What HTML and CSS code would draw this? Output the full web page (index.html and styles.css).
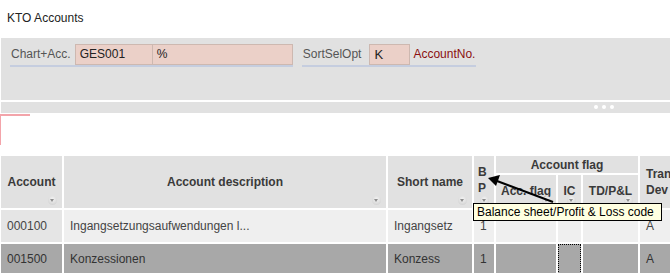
FILE: index.html
```html
<!DOCTYPE html>
<html>

<head>
    <title>KTO Accounts</title>
    <link rel="stylesheet" href="styles.css">
</head>

<body>
    <div class="page">
        <div class="title">KTO Accounts</div>

        <div class="filter">
            <div class="field">
                <span class="lbl">Chart+Acc.</span>
                <span class="inp chart">GES001</span>
                <span class="inp acc">%</span>
            </div>
            <div class="field">
                <span class="lbl opt">SortSelOpt</span>
                <span class="inp sel">K</span>
                <span class="value">AccountNo.</span>
            </div>
        </div>

        <div class="bar"><span class="dots"><i></i><i></i><i></i></span></div>
        <div class="marker"></div>

        <div class="grid">
            <div class="hd span2 c1 center">Account<span class="sort"></span></div>
            <div class="hd span2 c2 center">Account description<span class="sort"></span></div>
            <div class="hd span2 c3 center">Short name<span class="sort"></span></div>
            <div class="hd span2 c4 stack">B<br>P<span class="sort"></span></div>
            <div class="hd group">Account flag</div>
            <div class="hd span2 c8 stack wide">Tran<br>Dev</div>
            <div class="hd sub c5 center">Acc. flag<span class="sort"></span></div>
            <div class="hd sub c6 center">IC<span class="sort"></span></div>
            <div class="hd sub c7 center">TD/P&amp;L<span class="sort"></span></div>

            <div class="cell light key">000100</div>
            <div class="cell light">Ingangsetzungsaufwendungen l...</div>
            <div class="cell light">Ingangsetz</div>
            <div class="cell light">1</div>
            <div class="cell light"></div>
            <div class="cell light"></div>
            <div class="cell light"></div>
            <div class="cell light">A</div>

            <div class="cell dark">001500</div>
            <div class="cell dark">Konzessionen</div>
            <div class="cell dark">Konzess</div>
            <div class="cell dark">1</div>
            <div class="cell dark"></div>
            <div class="cell dark focus"></div>
            <div class="cell dark"></div>
            <div class="cell dark">A</div>
        </div>

        <svg class="arrow" width="80" height="40" viewBox="0 0 80 40">
            <line x1="70" y1="30" x2="14" y2="9" stroke="#000" stroke-width="2" />
            <polygon points="5,6 17,3 13,14" fill="#000" />
        </svg>
        <div class="tip">Balance sheet/Profit &amp; Loss code</div>
    </div>
</body>

</html>
```

FILE: styles.css
```css
body {
    margin: 0;
    background-color: #fff;
    font-family: "Liberation Sans", Arial, sans-serif;
    font-size: 12px;
    color: #222;
}

.page {
    position: relative;
    width: 670px;
    height: 273px;
    overflow: hidden;
}

.title {
    height: 38px;
    line-height: 36px;
    padding-left: 7px;
}

.filter {
    margin-left: 1px;
    height: 62px;
    background-color: #e1e1e1;
    box-sizing: border-box;
    padding: 6px 0 0 9px;
    display: flex;
    gap: 9px;
    align-items: flex-start;
}

.field {
    display: flex;
    align-items: stretch;
    height: 21px;
    border-bottom: 2px solid #c5cddf;
}

.lbl {
    color: #555;
    line-height: 21px;
    padding: 0 4px 0 1px;
}

.lbl.opt {
    padding-right: 8px;
}

.inp {
    box-sizing: border-box;
    height: 21px;
    line-height: 19px;
    background-color: #ebd0c8;
    border: 1px solid #cdb8b0;
    padding-left: 4px;
    color: #222;
}

.inp.chart {
    width: 78px;
}

.inp.acc {
    width: 141px;
    margin-left: -1px;
}

.inp.sel {
    width: 41px;
    font-size: 13px;
}

.value {
    color: #8b1010;
    line-height: 21px;
    padding: 0 1px 0 3px;
}

.bar {
    margin: 2px 0 0 1px;
    height: 11px;
    background-color: #e1e1e1;
    position: relative;
}

.dots {
    position: absolute;
    left: 593px;
    top: 3px;
    display: flex;
    gap: 4px;
}

.dots i {
    width: 4px;
    height: 4px;
    border-radius: 50%;
    background-color: #fff;
}

.marker {
    margin-top: 1px;
    width: 29px;
    height: 29px;
    border-top: 2px solid #f3a4aa;
    border-left: 1px solid #f3a4aa;
}

.grid {
    margin: 11px 0 0 1px;
    display: grid;
    grid-template-columns: 61px 322px 84px 20px 60px 23px 55px 60px;
    grid-template-rows: 17px 33px 32px 30px;
    gap: 2px;
}

.hd {
    position: relative;
    background-color: #e1e1e1;
    color: #3a3a3a;
    font-weight: bold;
    display: flex;
    align-items: center;
}

.span2 {
    grid-row: 1 / span 2;
}

.c1 { grid-column: 1; }
.c2 { grid-column: 2; }
.c3 { grid-column: 3; }
.c4 { grid-column: 4; }
.c5 { grid-column: 5; }
.c6 { grid-column: 6; }
.c7 { grid-column: 7; }
.c8 { grid-column: 8; }

.center {
    justify-content: center;
}

.hd.span2.center {
    padding-bottom: 1px;
}

.group {
    grid-column: 5 / span 3;
    grid-row: 1;
    justify-content: center;
}

.sub {
    grid-row: 2;
    padding-bottom: 2px;
}

.stack {
    line-height: 16px;
    padding: 0 0 4px 4px;
}

.stack.wide {
    padding-left: 6px;
    padding-bottom: 0;
    white-space: nowrap;
}

.sort {
    position: absolute;
    right: 5px;
    bottom: 3px;
    width: 9px;
    height: 9px;
    border-radius: 50%;
    background: radial-gradient(circle at 50% 35%, #f4f4f4, #cbcbcb);
}

.sort::after {
    content: "";
    position: absolute;
    left: 2px;
    top: 3px;
    border-left: 2.5px solid transparent;
    border-right: 2.5px solid transparent;
    border-top: 3px solid #8e8e8e;
}

.cell {
    display: flex;
    align-items: center;
    padding-left: 6px;
    color: #444;
    white-space: nowrap;
    overflow: hidden;
    box-sizing: border-box;
}

.light {
    background-color: #efefef;
}

.light.key {
    background-color: #e5e5e5;
}

.dark {
    background-color: #a8a8a8;
    color: #333;
}

.focus {
    border: 1px dotted #000;
}

.arrow {
    position: absolute;
    left: 483px;
    top: 172px;
}

.tip {
    position: absolute;
    left: 473px;
    top: 203px;
    width: 189px;
    height: 18px;
    box-sizing: border-box;
    border: 1px solid #000;
    background-color: #ffffe1;
    color: #000;
    line-height: 16px;
    padding-left: 3px;
    white-space: nowrap;
}
```
